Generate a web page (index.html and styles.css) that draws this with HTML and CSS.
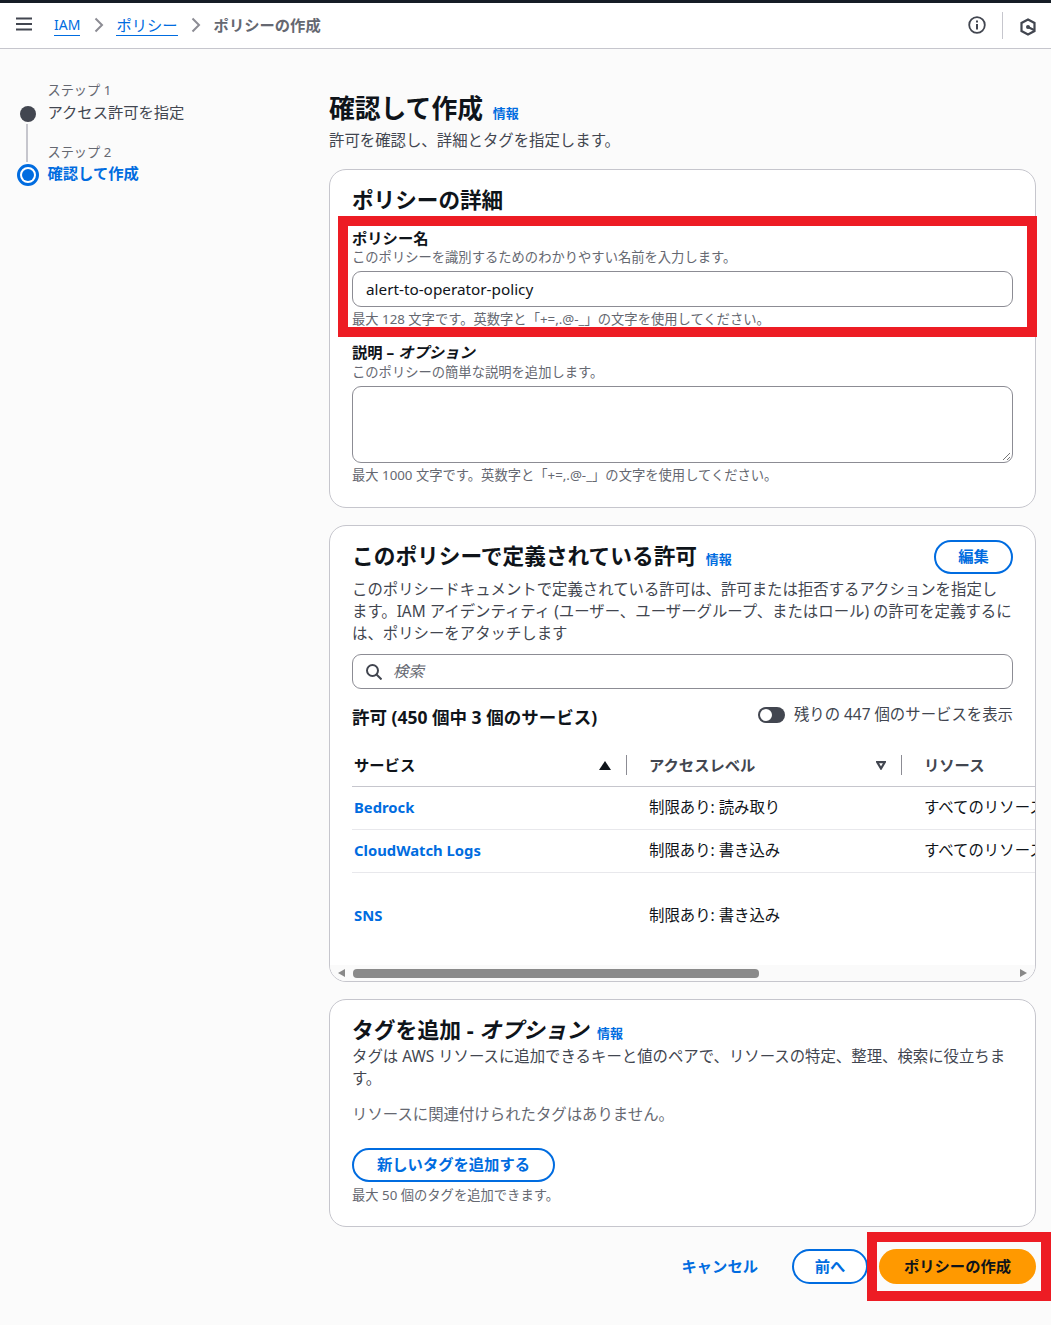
FILE: index.html
```html
<!DOCTYPE html>
<html lang="ja">
<head>
<meta charset="utf-8">
<title>ポリシーの作成</title>
<link rel="stylesheet" href="styles.css">
</head>
<body>
<header class="topbar">
  <svg class="menu-icon" viewBox="0 0 16 14" width="16" height="14"><path d="M0 1.500h16M0 7h16M0 12.500h16" fill="none" stroke="#424650" stroke-width="2"/></svg>
  <nav class="crumbs">
    <a class="crumb-link crumb-iam">IAM</a>
    <svg class="chev chev-a" viewBox="0 0 10 16" width="10" height="16"><path d="M1.500 1.500 8 8l-6.500 6.500" fill="none" stroke="#8c8c94" stroke-width="2"/></svg>
    <a class="crumb-link">ポリシー</a>
    <svg class="chev chev-b" viewBox="0 0 10 16" width="10" height="16"><path d="M1.500 1.500 8 8l-6.500 6.500" fill="none" stroke="#8c8c94" stroke-width="2"/></svg>
    <span class="crumb-current">ポリシーの作成</span>
  </nav>
  <div class="top-tools">
    <svg class="tool-info" viewBox="0 0 18 18" width="18" height="18"><circle cx="9" cy="9" r="7.800" fill="none" stroke="#424650" stroke-width="1.800"/><path d="M9 8v5.500" stroke="#424650" stroke-width="2"/><path d="M9 4.500v2" stroke="#424650" stroke-width="2"/></svg>
    <span class="tool-sep"></span>
    <svg class="tool-hex" viewBox="0 0 16 18" width="16" height="18"><path d="M8 1.500 14.500 5v8L8 16.500 1.500 13V5z" fill="none" stroke="#424650" stroke-width="2.200"/><circle cx="8" cy="9" r="2" fill="#424650"/><path d="M8 9l6 3" stroke="#424650" stroke-width="2"/></svg>
  </div>
</header>

<div class="layout">
  <aside class="steps">
    <div class="step">
      <span class="step-label">ステップ 1</span>
      <div class="step-name-row">
        <span class="dot-col"><span class="dot"></span></span>
        <span class="step-name">アクセス許可を指定</span>
      </div>
    </div>
    <div class="step step-two">
      <span class="step-label">ステップ 2</span>
      <div class="step-name-row">
        <span class="dot-col"><span class="dot-active"></span></span>
        <span class="step-name active">確認して作成</span>
      </div>
    </div>
    <span class="step-line"></span>
  </aside>

  <main class="main">
    <div class="page-head">
      <h1 class="page-title">確認して作成 <a class="info">情報</a></h1>
      <p class="page-sub">許可を確認し、詳細とタグを指定します。</p>
    </div>

    <section class="card card-details">
      <h2 class="card-title">ポリシーの詳細</h2>
      <div class="field field-name">
        <div class="label">ポリシー名</div>
        <div class="hint">このポリシーを識別するためのわかりやすい名前を入力します。</div>
        <div class="input">alert-to-operator-policy</div>
        <div class="hint hint-after">最大 128 文字です。英数字と「+=,.@-_」の文字を使用してください。</div>
      </div>
      <div class="field field-desc">
        <div class="label">説明 – <em>オプション</em></div>
        <div class="hint">このポリシーの簡単な説明を追加します。</div>
        <div class="textarea">
          <svg class="grip" viewBox="0 0 10 10" width="10" height="10"><path d="M9 2 2 9M9 6 6 9" stroke="#767676" stroke-width="1"/></svg>
        </div>
        <div class="hint hint-after">最大 1000 文字です。英数字と「+=,.@-_」の文字を使用してください。</div>
      </div>
    </section>

    <section class="card card-perms">
      <div class="perm-head">
        <h2 class="card-title perm-title">このポリシーで定義されている許可 <a class="info">情報</a></h2>
        <button class="btn btn-outline btn-edit">編集</button>
      </div>
      <p class="perm-text">このポリシードキュメントで定義されている許可は、許可または拒否するアクションを指定します。IAM アイデンティティ (ユーザー、ユーザーグループ、またはロール) の許可を定義するには、ポリシーをアタッチします</p>
      <div class="search">
        <svg viewBox="0 0 16 16" width="16" height="16"><circle cx="6.500" cy="6.500" r="5.500" fill="none" stroke="#424650" stroke-width="2"/><path d="m10.500 10.500 5 5" stroke="#424650" stroke-width="2"/></svg>
        <em>検索</em>
      </div>
      <div class="perm-bar">
        <h3 class="perm-count">許可 (450 個中 3 個のサービス)</h3>
        <div class="toggle-wrap">
          <span class="toggle"><span class="knob"></span></span>
          <span>残りの 447 個のサービスを表示</span>
        </div>
      </div>
      <div class="table">
        <div class="row head">
          <div class="cell col-a"><span>サービス</span><span class="sort sort-on"></span><i class="col-sep"></i></div>
          <div class="cell col-b muted"><span>アクセスレベル</span><svg class="sort-off" viewBox="0 0 10 9" width="10" height="9"><path d="M1.200 1.200h7.600L5 7.500z" fill="none" stroke="#424650" stroke-width="2.200"/></svg><i class="col-sep"></i></div>
          <div class="cell col-c muted">リソース</div>
        </div>
        <div class="row body-row">
          <div class="cell col-a"><a class="svc">Bedrock</a></div>
          <div class="cell col-b">制限あり: 読み取り</div>
          <div class="cell col-c">すべてのリソース</div>
        </div>
        <div class="row body-row">
          <div class="cell col-a"><a class="svc">CloudWatch Logs</a></div>
          <div class="cell col-b">制限あり: 書き込み</div>
          <div class="cell col-c">すべてのリソース</div>
        </div>
        <div class="row body-row last">
          <div class="cell col-a"><a class="svc">SNS</a></div>
          <div class="cell col-b">制限あり: 書き込み</div>
          <div class="cell col-c"></div>
        </div>
      </div>
      <div class="scrollbar">
        <span class="arrow-l"></span>
        <span class="track"><span class="thumb"></span></span>
        <span class="arrow-r"></span>
      </div>
    </section>

    <section class="card card-tags">
      <h2 class="card-title tag-title"><span>タグを追加 - <em>オプション</em></span> <a class="info">情報</a></h2>
      <p class="tag-text">タグは AWS リソースに追加できるキーと値のペアで、リソースの特定、整理、検索に役立ちます。</p>
      <p class="tag-none">リソースに関連付けられたタグはありません。</p>
      <button class="btn btn-outline btn-add">新しいタグを追加する</button>
      <div class="hint tag-limit">最大 50 個のタグを追加できます。</div>
    </section>

    <footer class="actions">
      <a class="cancel">キャンセル</a>
      <button class="btn btn-outline btn-prev">前へ</button>
      <button class="btn btn-primary">ポリシーの作成</button>
    </footer>
  </main>
</div>

<div class="mark mark-field"></div>
<div class="mark mark-create"></div>
</body>
</html>
```

FILE: styles.css
```css
* { box-sizing: border-box; }
html, body { margin: 0; padding: 0; }
body {
  width: 1051px;
  height: 1325px;
  overflow: hidden;
  position: relative;
  background: #fbfbfb;
  color: #0f141a;
  font-family: "Noto Sans", "Noto Sans CJK JP", sans-serif;
  font-size: 15.4px;
  line-height: 22px;
}
h1, h2, h3, p { margin: 0; }
em { font-style: italic; }
a { color: #006ce0; }

.topbar {
  height: 49px;
  background: #fff;
  border-top: 3px solid #161d26;
  border-bottom: 1px solid #c6c6cd;
  display: flex;
  align-items: center;
  padding-left: 16px;
}
.menu-icon { flex: none; margin-top: -4px; }
.crumbs { display: flex; align-items: center; margin-left: 22px; font-size: 15.3px; margin-top: -2px; }
.crumb-link { color: #006ce0; border-bottom: 1px solid #006ce0; line-height: 20px; margin-top: 2px; }
.crumb-iam { font-size: 14px; }
.chev-a { margin: 0 12px 0 14px; }
.chev-b { margin: 0 13px 0 13px; }
.crumb-current { color: #656871; font-weight: 700; }
.top-tools { margin-left: auto; display: flex; align-items: center; padding-right: 15px; }
.tool-info { margin-top: -2px; }
.tool-sep { width: 1px; height: 27px; background: #c6c6cd; margin: 0 17px 0 16px; }
.tool-hex { margin-top: 2px; }

.layout { display: flex; }
.steps { width: 329px; flex: none; padding: 30px 0 0 47.5px; position: relative; }
.step { display: flex; flex-direction: column; }
.step-two { margin-top: 18px; }
.step-label { font-size: 13.2px; line-height: 22px; color: #656871; }
.step-name-row { display: flex; align-items: center; position: relative; height: 22px; margin-top: 0; }
.step-two .step-name-row { margin-top: -1px; }
.dot-col { position: absolute; left: -30.5px; width: 22px; display: flex; justify-content: center; }
.dot { width: 16px; height: 16px; border-radius: 50%; background: #424650; margin-top: 4px; }
.dot-active { width: 22px; height: 22px; border-radius: 50%; border: 3px solid #006ce0; background: #fff; display: flex; align-items: center; justify-content: center; margin-top: 4px; }
.dot-active::after { content: ""; width: 12px; height: 12px; border-radius: 50%; background: #006ce0; }
.step-name { font-size: 15.3px; color: #424650; }
.step-name.active { color: #006ce0; font-weight: 700; }
.step-line { position: absolute; left: 26px; top: 75px; width: 2px; height: 38px; background: #c6c6cd; }

.main { width: 707px; flex: none; }
.page-head { padding-top: 41px; }
.page-title { font-size: 25.8px; line-height: 36px; font-weight: 700; }
.info { font-size: 13px; font-weight: 700; line-height: 20px; margin-left: 3px; }
.page-sub { font-size: 15.4px; line-height: 22px; color: #424650; margin-top: 4px; }

.card {
  background: #fff;
  border: 1px solid #c6c6cd;
  border-radius: 17px;
  margin-top: 17px;
  padding-left: 22px;
  padding-right: 22px;
}
.card-details { height: 339px; margin-top: 17px; padding-top: 14px; }
.card-title { font-size: 21.6px; line-height: 32px; font-weight: 700; }
.field-name { margin-top: 11px; }
.label { font-size: 15.3px; line-height: 22px; font-weight: 700; }
.hint { font-size: 13.3px; line-height: 17px; color: #656871; }
.input {
  height: 36px;
  margin-top: 5px;
  border: 1px solid #8c8c94;
  border-radius: 9px;
  background: #fff;
  padding: 0 13px;
  line-height: 35px;
  font-size: 15.3px;
}
.hint-after { margin-top: 4px; }
.field-desc { margin-top: 13px; }
.field-desc .label { margin-bottom: 1px; }
.textarea {
  height: 77px;
  margin-top: 5px;
  border: 1px solid #8c8c94;
  border-radius: 9px;
  position: relative;
}
.grip { position: absolute; right: 1px; bottom: 1px; }

.card-perms { height: 457px; padding-top: 14px; padding-right: 0; overflow: hidden; position: relative; }
.perm-head { display: flex; justify-content: space-between; align-items: center; padding-right: 22px; height: 32px; }
.perm-title { font-size: 21.7px; }
.btn {
  font-family: inherit;
  font-weight: 700;
  font-size: 15.3px;
  line-height: 20px;
  border-radius: 20px;
  cursor: pointer;
  padding: 0 0 2px;
}
.btn-outline { background: #fff; color: #006ce0; border: 2px solid #006ce0; }
.btn-edit { width: 79px; height: 34px; margin-top: 2px; }
.perm-text { font-size: 15.4px; line-height: 22px; color: #424650; margin: 7px 23px 0 0; }
.search {
  height: 35px;
  margin: 9px 22px 0 0;
  border: 1px solid #8c8c94;
  border-radius: 9px;
  display: flex;
  align-items: center;
  gap: 11px;
  padding-left: 13px;
  font-size: 15.4px;
  color: #656871;
}
.perm-bar { display: flex; justify-content: space-between; align-items: center; margin: 16px 22px 0 0; height: 24px; }
.perm-count { font-size: 17.5px; line-height: 24px; font-weight: 700; }
.toggle-wrap { display: flex; align-items: center; gap: 9px; font-size: 15.4px; color: #424650; margin-top: -5px; }
.toggle { width: 27px; height: 16px; border-radius: 8px; background: #424650; display: flex; align-items: center; padding-left: 2px; }
.knob { width: 12px; height: 12px; border-radius: 50%; background: #fff; }

.table { margin-top: 14px; width: 900px; }
.row { display: flex; align-items: center; }
.head { height: 44px; border-bottom: 1px solid #c6c6cd; font-weight: 700; }
.body-row { height: 43px; border-bottom: 1px solid #e8e8ec; }
.body-row.last { height: 86px; border-bottom: 0; }
.cell { display: flex; align-items: center; position: relative; font-size: 15.4px; }
.col-a { width: 275px; padding-left: 2px; }
.col-b { width: 275px; padding-left: 22px; }
.col-c { flex: 1; padding-left: 22px; }
.body-row .col-a { padding-bottom: 2px; }
.head .cell { height: 22px; font-size: 15.3px; }
.muted { color: #424650; }
.col-sep { position: absolute; right: 0; top: 1px; width: 1px; height: 20px; background: #8c8c94; }
.sort-on { position: absolute; right: 16px; top: 7px; border-left: 6px solid transparent; border-right: 6px solid transparent; border-bottom: 9px solid #0f141a; }
.sort-off { position: absolute; right: 16px; top: 7px; }
.svc { font-weight: 700; font-size: 14.8px; }

.scrollbar {
  position: absolute;
  left: 0;
  right: 0;
  bottom: 0;
  height: 16px;
  background: #fafafa;
  display: flex;
  align-items: center;
}
.arrow-l { margin-left: 8px; border-top: 4.5px solid transparent; border-bottom: 4.5px solid transparent; border-right: 7px solid #888; }
.track { flex: 1; margin: 0 8px; height: 9px; }
.thumb { display: block; width: 406px; height: 9px; border-radius: 4px; background: #8a8a8a; }
.arrow-r { margin-right: 8px; border-top: 4.5px solid transparent; border-bottom: 4.5px solid transparent; border-left: 7px solid #888; }

.card-tags { height: 228px; padding-top: 14px; }
.tag-title { font-size: 21.8px; }
.tag-text { font-size: 15.4px; line-height: 22px; color: #424650; margin-top: 0; }
.tag-none { font-size: 15.4px; line-height: 22px; color: #656871; margin-top: 14px; }
.btn-add { display: block; width: 203px; height: 34px; margin-top: 22px; }
.tag-limit { margin-top: 5px; }

.actions { display: flex; justify-content: flex-end; align-items: center; margin-top: 22px; height: 35px; }
.cancel { font-weight: 700; font-size: 15.3px; margin-right: 34px; margin-top: -2px; }
.btn-prev { width: 76px; height: 35px; margin-right: 11px; }
.btn-primary { width: 157px; height: 35px; background: #ff9900; border: 0; color: #0f141a; }

.mark { position: absolute; border: 10px solid #ed1c24; pointer-events: none; }
.mark-field { left: 338px; top: 216px; width: 699px; height: 121px; }
.mark-create { left: 867px; top: 1232px; width: 184px; height: 69px; }
```
